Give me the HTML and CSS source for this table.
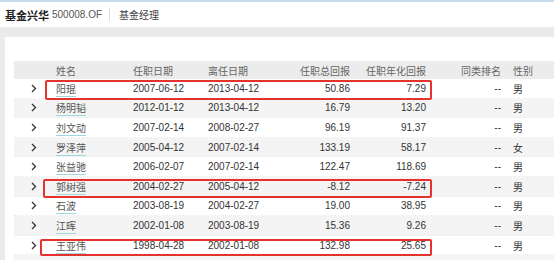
FILE: index.html
```html
<!DOCTYPE html>
<html lang="zh-CN">
<head>
    <meta charset="UTF-8">
    <title>基金兴华 基金经理</title>
    <link rel="stylesheet" href="styles.css">
</head>
<body>
    <!-- Fund title bar -->
    <div class="topbar">
        <span class="fund-name">基金兴华</span>
        <span class="fund-code">500008.OF</span>
        <span class="divider"></span>
        <span class="tab">基金经理</span>
    </div>

    <div class="main">
        <div class="card">
            <div class="table">
                <div class="row head">
                    <span></span>
                    <span>姓名</span>
                    <span>任职日期</span>
                    <span>离任日期</span>
                    <span class="num">任职总回报</span>
                    <span class="num">任职年化回报</span>
                    <span class="num">同类排名</span>
                    <span class="sex">性别</span>
                </div>
                <div id="rows"></div>

                <!-- Annotation boxes -->
                <div class="mark mark-1"></div>
                <div class="mark mark-2"></div>
                <div class="mark mark-3"></div>
            </div>
        </div>
    </div>

<script>
  const managers = [
    ['阳琨', '2007-06-12', '2013-04-12', '50.86', '7.29', '男'],
    ['杨明韬', '2012-01-12', '2013-04-12', '16.79', '13.20', '男'],
    ['刘文动', '2007-02-14', '2008-02-27', '96.19', '91.37', '男'],
    ['罗泽萍', '2005-04-12', '2007-02-14', '133.19', '58.17', '女'],
    ['张益驰', '2006-02-07', '2007-02-14', '122.47', '118.69', '男'],
    ['郭树强', '2004-02-27', '2005-04-12', '-8.12', '-7.24', '男'],
    ['石波', '2003-08-19', '2004-02-27', '19.00', '38.95', '男'],
    ['江晖', '2002-01-08', '2003-08-19', '15.36', '9.26', '男'],
    ['王亚伟', '1998-04-28', '2002-01-08', '132.98', '25.65', '男']
  ];

  const chevron = '<svg class="chev" width="6" height="9" viewBox="0 0 6 9"><path d="M1 1l3.5 3.5L1 8" fill="none" stroke="#333" stroke-width="1.3"/></svg>';

  const rows = document.getElementById('rows');
  managers.forEach(function (m) {
    const row = document.createElement('div');
    row.className = 'row';
    row.innerHTML =
      '<span class="arrow">' + chevron + '</span>' +
      '<span><a class="name">' + m[0] + '</a></span>' +
      '<span>' + m[1] + '</span>' +
      '<span>' + m[2] + '</span>' +
      '<span class="num">' + m[3] + '</span>' +
      '<span class="num">' + m[4] + '</span>' +
      '<span class="num">--</span>' +
      '<span class="sex">' + m[5] + '</span>';
    rows.appendChild(row);
  });

  // next row, cut off by the window
  const filler = document.createElement('div');
  filler.className = 'row';
  rows.appendChild(filler);
</script>
</body>
</html>
```

FILE: styles.css
```css
/* Base */
* {
    box-sizing: border-box;
}

body {
    margin: 0;
    font-family: "Liberation Sans", "Noto Sans CJK SC", sans-serif;
    font-size: 10px;
    color: #333;
    background: #ebebeb;
    overflow: hidden;
}

/* Title bar */
.topbar {
    height: 27px;
    display: flex;
    align-items: center;
    padding-left: 5px;
    background: #fff;
    border-top: 2px solid #c8dcef;
}

.fund-name {
    font-size: 11px;
    font-weight: bold;
    color: #222;
}

.fund-code {
    margin-left: 3px;
    color: #555;
}

.divider {
    width: 1px;
    height: 13px;
    margin: 0 9px 0 7px;
    background: #ddd;
}

.tab {
    color: #444;
}

/* Content area */
.main {
    height: calc(100vh - 27px);
    overflow: hidden;
    padding: 10px 0 0 5px;
}

.card {
    height: 100%;
    overflow: hidden;
    background: #fff;
    padding: 24px 0 0 9px;
}

.table {
    position: relative;
}

.row {
    display: grid;
    grid-template-columns: 42px 77px 75px 82px 60px 76px 75px 1fr;
    align-items: center;
    height: 19.6px;
    border-bottom: 1px dotted #ececec;
}

.row:nth-child(even) {
    background: #f4f4f4;
}

.row.head {
    height: 18px;
    background: #ececec;
    color: #666;
    border-bottom: none;
}

.num {
    text-align: right;
}

.sex {
    padding-left: 12px;
}

.arrow {
    padding-left: 17px;
    display: flex;
    align-items: center;
}

.name {
    color: #555;
    text-decoration: underline;
    text-decoration-color: #9fd6e2;
    text-decoration-thickness: 1px;
    text-underline-offset: 3px;
}

/* Red annotation boxes drawn over the table */
.mark {
    position: absolute;
    right: 122px;
    border: 2px solid #e5322d;
    border-radius: 2px;
    pointer-events: none;
}

.mark-1 {
    left: 31px;
    top: 19px;
    height: 20px;
}

.mark-2 {
    left: 29px;
    top: 118px;
    height: 19px;
}

.mark-3 {
    left: 26px;
    top: 178px;
    height: 17px;
}
```
